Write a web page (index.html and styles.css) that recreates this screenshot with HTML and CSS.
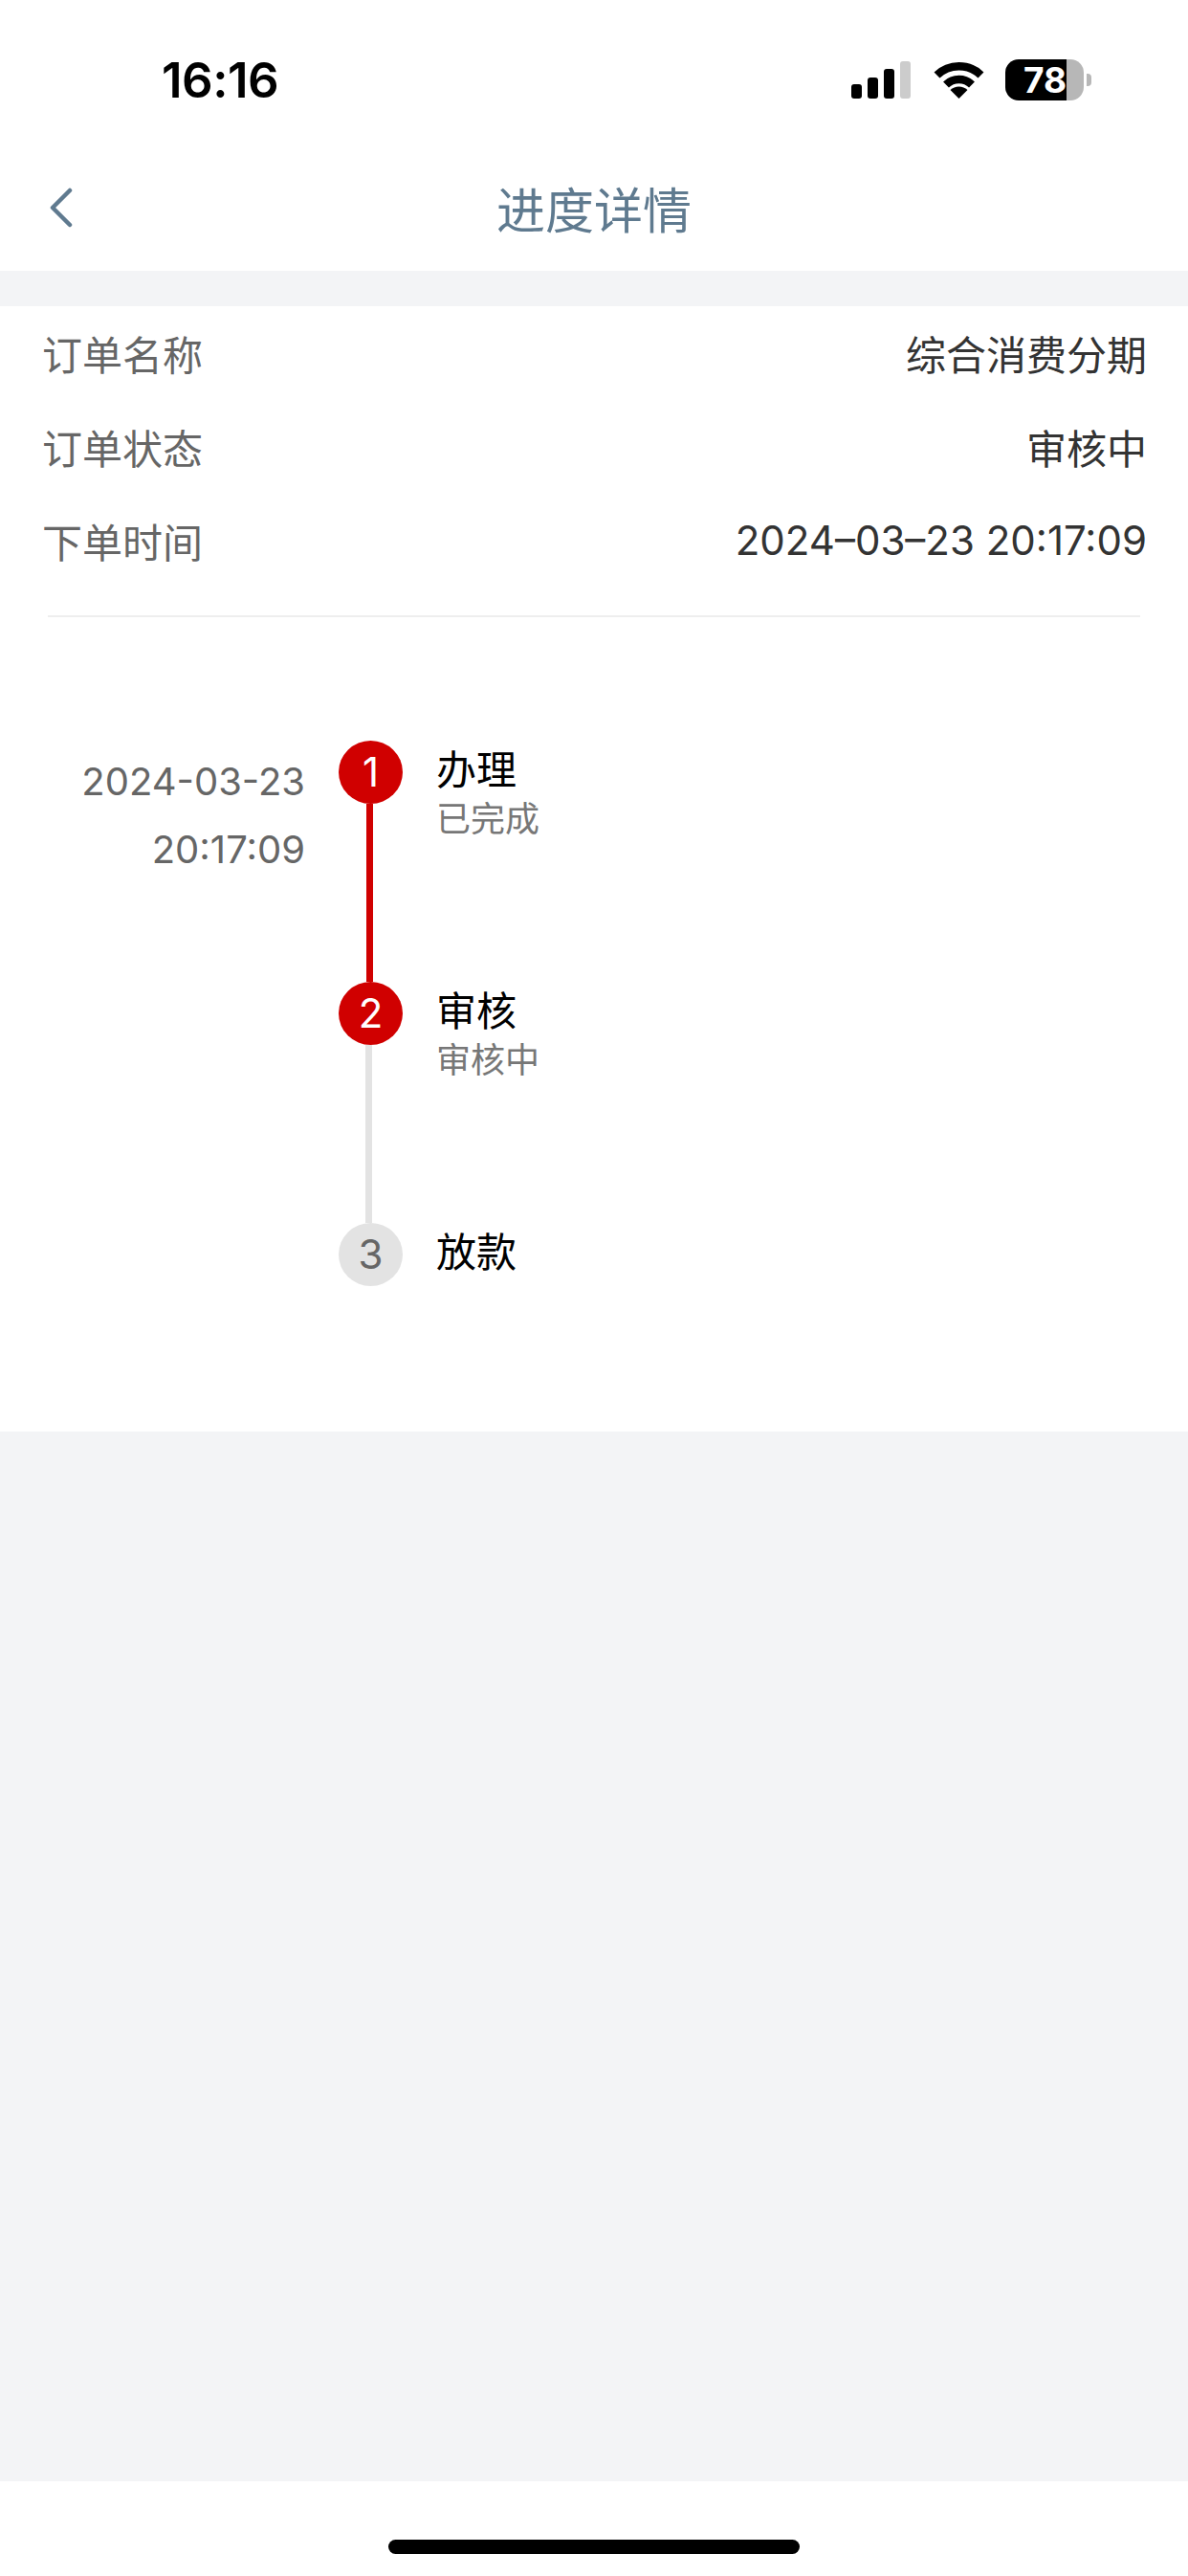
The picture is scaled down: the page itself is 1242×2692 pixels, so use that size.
FILE: index.html
```html
<!DOCTYPE html>
<html lang="zh-CN">
<head>
<meta charset="utf-8">
<title>进度详情</title>
<link rel="stylesheet" href="styles.css">
</head>
<body>
<div class="app">
  <header class="status">
    <span class="clock">16:16</span>
    <div class="status-icons">
      <div class="signal"><i class="b1"></i><i class="b2"></i><i class="b3"></i><i class="b4"></i></div>
      <svg class="wifi" viewBox="0 0 55 40" width="55" height="40" aria-hidden="true">
        <path d="M4.5 15.5A33 33 0 0 1 50.5 15.5" fill="none" stroke="#000" stroke-width="8.5"/>
        <path d="M14 25.5A19.5 19.5 0 0 1 41 25.5" fill="none" stroke="#000" stroke-width="8.5"/>
        <path d="M27.5 40L18.5 31A13 13 0 0 1 36.500 31Z" fill="#000"/>
      </svg>
      <div class="battery"><span class="battery-level">78</span></div>
    </div>
  </header>
  <nav class="nav">
    <svg class="back" viewBox="0 0 24 42" width="24" height="42" aria-hidden="true">
      <path d="M21 3L3 21L21 39" fill="none" stroke="#5f7a8f" stroke-width="4.500" stroke-linecap="round" stroke-linejoin="round"/>
    </svg>
    <h1 class="title">进度详情</h1>
  </nav>
  <main class="main">
    <section class="card">
      <div class="info-row"><span class="label">订单名称</span><span class="value">综合消费分期</span></div>
      <div class="info-row"><span class="label">订单状态</span><span class="value">审核中</span></div>
      <div class="info-row"><span class="label">下单时间</span><span class="value num">2024–03–23 20:17:09</span></div>
      <div class="divider"></div>
      <div class="timeline">
        <div class="step">
          <div class="time">2024-03-23<br>20:17:09</div>
          <div class="rail"><span class="dot dot-on">1</span><span class="line line-on"></span></div>
          <div class="step-text"><div class="step-title">办理</div><div class="step-sub">已完成</div></div>
        </div>
        <div class="step">
          <div class="time"></div>
          <div class="rail"><span class="dot dot-on">2</span><span class="line line-off"></span></div>
          <div class="step-text"><div class="step-title">审核</div><div class="step-sub">审核中</div></div>
        </div>
        <div class="step step-last">
          <div class="time"></div>
          <div class="rail"><span class="dot dot-off">3</span></div>
          <div class="step-text"><div class="step-title">放款</div></div>
        </div>
      </div>
    </section>
  </main>
  <footer class="home"><span class="home-bar"></span></footer>
</div>
</body>
</html>
```
FILE: styles.css
```css
* { box-sizing: border-box; }
html, body { margin: 0; padding: 0; background: #fff; }
body { font-family: "Inter", "Noto Sans CJK SC", sans-serif; }
.app { width: 1242px; height: 2692px; display: flex; flex-direction: column; background: #fff; overflow: hidden; }

.status { height: 150px; flex: none; display: flex; justify-content: space-between; align-items: flex-start; padding: 52px 109px 0 169px; }
.clock { font-size: 51px; line-height: 64px; font-weight: 600; color: #000; letter-spacing: -0.5px; }
.status-icons { display: flex; align-items: flex-start; padding-top: 10px; }
.signal { display: flex; align-items: flex-end; gap: 6px; height: 41px; width: 62px; }
.signal i { display: block; width: 11px; background: #000; border-radius: 3px; }
.signal .b1 { height: 15px; }
.signal .b2 { height: 22px; }
.signal .b3 { height: 31px; }
.signal .b4 { height: 39px; background: #ccc; }
.wifi { margin-left: 23px; margin-top: 1px; }
.battery { position: relative; margin-left: 21px; width: 82px; height: 43px; border-radius: 14px; background: linear-gradient(to right, #000 0, #000 64px, #b7b7b7 64px); display: flex; align-items: center; justify-content: flex-start; }
.battery::after { content: ""; position: absolute; left: 85px; top: 15px; width: 5px; height: 13px; background: #b7b7b7; border-radius: 0 4px 4px 0; }
.battery-level { width: 64px; text-align: right; font-size: 37px; line-height: 43px; font-weight: 700; color: #fff; }

.nav { height: 133px; flex: none; display: grid; grid-template-columns: 1fr auto 1fr; align-items: center; padding-bottom: 0; }
.back { margin-left: 52px; }
.title { margin: 0; font-size: 51px; line-height: 70px; font-weight: 400; color: #5f7a8f; font-family: "Noto Sans CJK SC", sans-serif; }

.main { flex: 1; background: #f3f4f6; padding-top: 37px; }
.card { background: #fff; height: 1176px; display: flow-root; }
.info-row { height: 98px; display: flex; justify-content: space-between; align-items: center; padding: 0 43px 0 44px; font-size: 42px; line-height: 60px; }
.label { color: #666; font-family: "Noto Sans CJK SC", sans-serif; }
.value { color: #333; font-family: "Noto Sans CJK SC", sans-serif; }
.value.num { font-family: "Inter", sans-serif; }
.divider { height: 2px; margin: 29px 50px 0; background: #eee; }

.timeline { margin-top: 129px; }
.step { height: 252px; display: grid; grid-template-columns: 319px 67px 1fr; column-gap: 35px; }
.step-last { height: 100px; }
.time { font-size: 40px; line-height: 71px; color: #666; text-align: right; padding-top: 7px; }
.rail { display: flex; flex-direction: column; }
.dot { flex: none; width: 67px; height: 66px; border-radius: 50%; display: flex; align-items: center; justify-content: center; font-size: 42px; line-height: 1; }
.dot-on { background: #d00000; color: #fff; }
.dot-off { background: #e3e3e3; color: #666; }
.line { flex: 1; width: 7px; margin-left: 29px; }
.line-on { background: #d00000; }
.line-off { background: #e3e3e3; margin-left: 28px; }
.step-text { font-family: "Noto Sans CJK SC", sans-serif; }
.step-title { font-size: 42px; line-height: 56px; color: #000; margin-top: 0; }
.step-sub { font-size: 36px; line-height: 46px; color: #777; }

.home { height: 99px; flex: none; background: #fff; display: flex; justify-content: center; padding-top: 61px; }
.home-bar { display: block; width: 430px; height: 15px; border-radius: 8px; background: #000; }
```
